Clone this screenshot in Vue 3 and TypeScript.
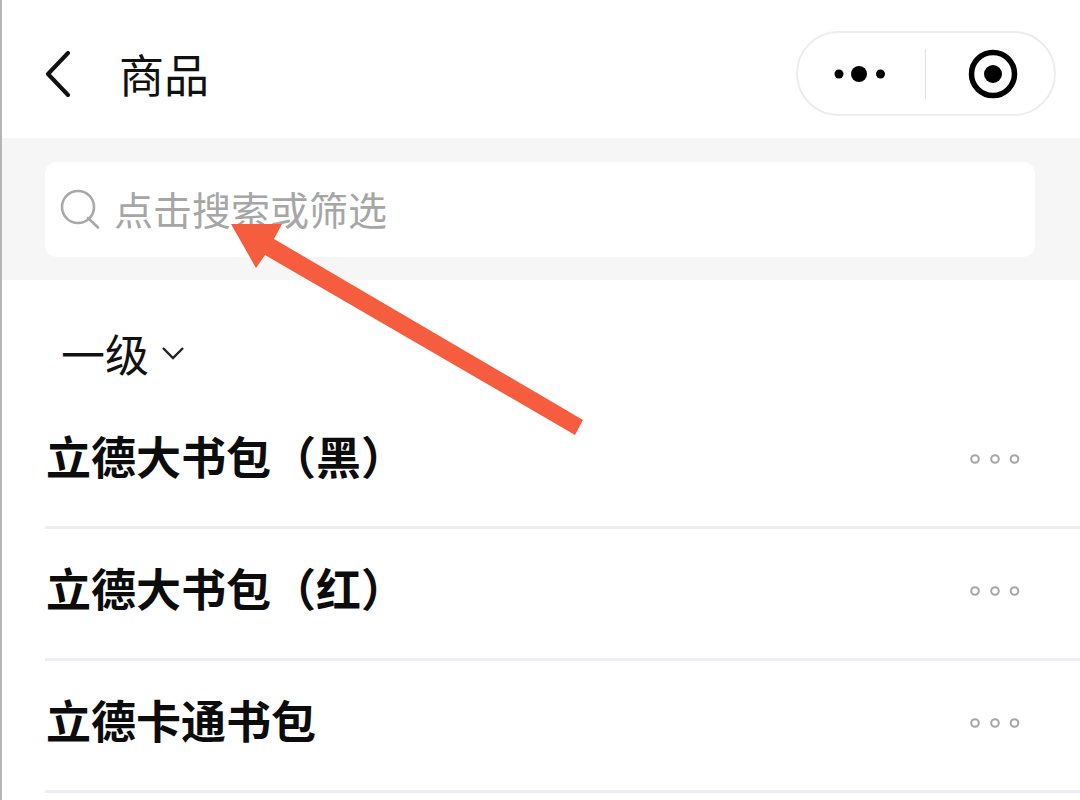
<script setup lang="ts">
const goods: string[] = ['立德大书包（黑）', '立德大书包（红）', '立德卡通书包']
</script>

<template>
  <div class="page">
    <header class="nav">
      <svg class="nav-back" width="26" height="46" viewBox="0 0 26 46">
        <path d="M23 2 L3 23 L23 44" fill="none" stroke="#111" stroke-width="4" stroke-linecap="round" stroke-linejoin="round" />
      </svg>
      <span class="nav-title">商品</span>
      <div class="capsule">
        <div class="capsule-side capsule-side-left">
          <svg width="52" height="18" viewBox="0 0 52 18">
            <circle cx="5" cy="9" r="4.5" fill="#000" />
            <circle cx="25" cy="9" r="8" fill="#000" />
            <circle cx="46.500" cy="9" r="4.500" fill="#000" />
          </svg>
        </div>
        <span class="capsule-line" />
        <div class="capsule-side capsule-side-right">
          <svg width="50" height="50" viewBox="0 0 50 50">
            <circle cx="25" cy="25" r="21.500" fill="none" stroke="#000" stroke-width="5.500" />
            <circle cx="25" cy="25" r="9" fill="#000" />
          </svg>
        </div>
      </div>
    </header>

    <section class="search-band">
      <div class="search-box">
        <svg class="search-icon" width="42" height="42" viewBox="0 0 42 42">
          <circle cx="18" cy="18" r="16" fill="none" stroke="#a8a8a8" stroke-width="2.600" />
          <path d="M28 29 L38 38.500" fill="none" stroke="#a8a8a8" stroke-width="2.600" stroke-linecap="round" />
        </svg>
        <span class="search-text">点击搜索或筛选</span>
      </div>
    </section>

    <div class="filter">
      <span class="filter-label">一级</span>
      <svg width="24" height="14" viewBox="0 0 24 14">
        <path d="M2 2 L12 12 L22 2" fill="none" stroke="#222" stroke-width="2.400" />
      </svg>
    </div>

    <ul class="list">
      <li v-for="name in goods" :key="name" class="row">
        <span class="row-name">{{ name }}</span>
        <svg class="row-more" width="54" height="12" viewBox="0 0 54 12">
          <circle cx="6" cy="6" r="3.800" fill="none" stroke="#a6a6a6" stroke-width="2" />
          <circle cx="26" cy="6" r="3.800" fill="none" stroke="#a6a6a6" stroke-width="2" />
          <circle cx="45.500" cy="6" r="3.800" fill="none" stroke="#a6a6a6" stroke-width="2" />
        </svg>
      </li>
    </ul>

    <svg class="arrow" width="1080" height="800" viewBox="0 0 1080 800">
      <polygon points="231,224 282,224 274,239 583,420 575,435 265,255 256,268" fill="#f55d3e" />
    </svg>
  </div>
</template>

<style>
html,
body {
  margin: 0;
  background: #fff;
}
</style>

<style scoped>
.page {
  position: relative;
  width: 1080px;
  height: 800px;
  overflow: hidden;
  box-sizing: border-box;
  border-left: 2px solid #b5b5b5;
  background: #fff;
  font-family: "Noto Sans CJK SC", "Noto Sans", sans-serif;
  color: #111;
}

.nav {
  display: flex;
  align-items: flex-start;
  height: 138px;
  padding: 0 24px 0 43px;
  box-sizing: border-box;
}

.nav-back {
  flex: none;
  margin-top: 51px;
}

.nav-title {
  margin-left: 48px;
  margin-top: 44px;
  font-size: 45px;
  line-height: 60px;
}

.capsule {
  display: flex;
  align-items: center;
  width: 260px;
  height: 85px;
  margin-left: auto;
  margin-top: 31px;
  box-sizing: border-box;
  border: 2px solid #ececec;
  border-radius: 43px;
}

.capsule-side {
  display: flex;
  align-items: center;
  justify-content: center;
  box-sizing: border-box;
}

.capsule-side-left {
  flex: none;
  width: 127px;
  padding-right: 3px;
}

.capsule-side-right {
  flex: 1;
  padding-left: 6px;
}

.capsule-line {
  flex: none;
  width: 1px;
  height: 50px;
  background: #e2e2e2;
}

.search-band {
  height: 142px;
  padding: 24px 45px 23px 43px;
  box-sizing: border-box;
  background: #f6f6f6;
}

.search-box {
  display: flex;
  align-items: center;
  height: 95px;
  padding-left: 15px;
  border-radius: 12px;
  background: #fff;
}

.search-icon {
  flex: none;
}

.search-text {
  margin-left: 12px;
  margin-top: -4px;
  font-size: 39px;
  line-height: 60px;
  color: #a6a6a6;
}

.filter {
  display: flex;
  align-items: center;
  gap: 12px;
  height: 117px;
  padding-left: 59px;
  box-sizing: border-box;
}

.filter-label {
  font-size: 44px;
  line-height: 60px;
  margin-top: 28px;
}

.filter svg {
  margin-top: 28px;
}

.list {
  margin: 0;
  padding: 0 0 0 43px;
  list-style: none;
}

.row {
  display: flex;
  align-items: center;
  justify-content: space-between;
  height: 132px;
  padding: 0 57px 6px 1px;
  box-sizing: border-box;
  border-bottom: 3px solid #eceef3;
}

.row-name {
  margin-top: -6px;
  font-size: 45px;
  font-weight: 700;
  line-height: 60px;
  color: #0c0c0c;
}

.row-more {
  flex: none;
}

.arrow {
  position: absolute;
  top: 0;
  left: -2px;
}
</style>
